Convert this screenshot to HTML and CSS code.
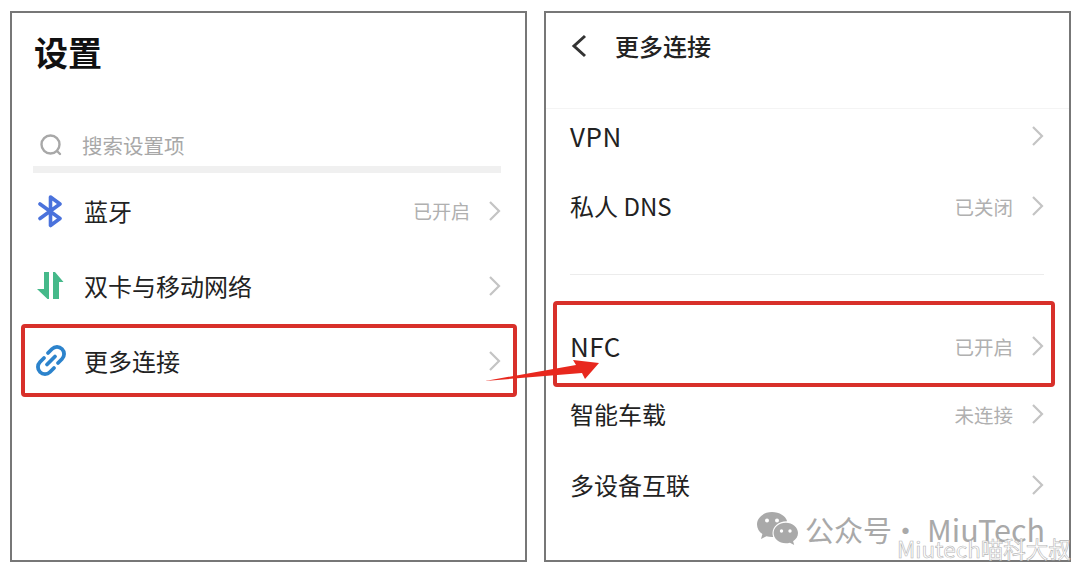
FILE: index.html
```html
<!DOCTYPE html>
<html lang="zh-CN">
<head>
    <meta charset="UTF-8">
    <meta name="viewport" content="width=device-width, initial-scale=1.0">
    <title>更多连接</title>
    <link rel="stylesheet" href="styles.css">
</head>
<body>
    <div class="page">
        <section class="panel left">
            <h1 class="big-title">设置</h1>
            <div class="search">
                <svg class="search-icon" width="24" height="24" viewBox="0 0 24 24"><circle cx="11.5" cy="11.5" r="9" fill="none" stroke="#a8a8a8" stroke-width="2.4"/><path d="M18 18l3 3" stroke="#a8a8a8" stroke-width="2.4" stroke-linecap="round"/></svg>
                <span>搜索设置项</span>
            </div>
            <div class="search-line"></div>
            <div class="row icon-row">
                <svg class="row-icon" width="32" height="34" viewBox="0 0 32 34"><path d="M6 10l20 14.500-9.500 7V3l9.500 7L6 24.500" fill="none" stroke="#4a72dc" stroke-width="3.600" stroke-linejoin="round" stroke-linecap="round"/></svg>
                <span class="row-name">蓝牙</span>
                <span class="status">已开启</span>
                <svg class="chevron" width="13" height="22" viewBox="0 0 13 22"><path d="M2 2l9 9-9 9" fill="none" stroke="#c4c4c4" stroke-width="2.200"/></svg>
            </div>
            <div class="row icon-row">
                <svg class="row-icon" width="32" height="34" viewBox="0 0 32 34"><path d="M10 3h5v27h-1.500L3 20h7zM19 3h2l8.500 10H25v17h-6z" fill="#45b98a"/></svg>
                <span class="row-name">双卡与移动网络</span>
                <svg class="chevron" width="13" height="22" viewBox="0 0 13 22"><path d="M2 2l9 9-9 9" fill="none" stroke="#c4c4c4" stroke-width="2.200"/></svg>
            </div>
            <div class="row icon-row">
                <svg class="row-icon" width="32" height="34" viewBox="0 0 32 34"><path d="M14 9l4-4a7 7 0 0 1 10 10l-4 4M20 24l-4 4A7 7 0 0 1 6 18l4-4M13 20.500l8-8" fill="none" stroke="#2c83cc" stroke-width="3.800" stroke-linecap="round"/></svg>
                <span class="row-name">更多连接</span>
                <svg class="chevron" width="13" height="22" viewBox="0 0 13 22"><path d="M2 2l9 9-9 9" fill="none" stroke="#c4c4c4" stroke-width="2.200"/></svg>
            </div>
        </section>

        <section class="panel right">
            <header class="top-bar">
                <svg class="back" width="16" height="24" viewBox="0 0 16 24"><path d="M14 2L3 12l11 10" fill="none" stroke="#333" stroke-width="3"/></svg>
                <h2 class="top-title">更多连接</h2>
            </header>
            <div class="row plain vpn">
                <span class="row-name latin">VPN</span>
                <svg class="chevron" width="13" height="22" viewBox="0 0 13 22"><path d="M2 2l9 9-9 9" fill="none" stroke="#c4c4c4" stroke-width="2.200"/></svg>
            </div>
            <div class="row plain dns">
                <span class="row-name">私人 DNS</span>
                <span class="status">已关闭</span>
                <svg class="chevron" width="13" height="22" viewBox="0 0 13 22"><path d="M2 2l9 9-9 9" fill="none" stroke="#c4c4c4" stroke-width="2.200"/></svg>
            </div>
            <div class="group-line"></div>
            <div class="row plain nfc">
                <span class="row-name latin">NFC</span>
                <span class="status">已开启</span>
                <svg class="chevron" width="13" height="22" viewBox="0 0 13 22"><path d="M2 2l9 9-9 9" fill="none" stroke="#c4c4c4" stroke-width="2.200"/></svg>
            </div>
            <div class="row plain car">
                <span class="row-name">智能车载</span>
                <span class="status">未连接</span>
                <svg class="chevron" width="13" height="22" viewBox="0 0 13 22"><path d="M2 2l9 9-9 9" fill="none" stroke="#c4c4c4" stroke-width="2.200"/></svg>
            </div>
            <div class="row plain multi">
                <span class="row-name">多设备互联</span>
                <svg class="chevron" width="13" height="22" viewBox="0 0 13 22"><path d="M2 2l9 9-9 9" fill="none" stroke="#c4c4c4" stroke-width="2.200"/></svg>
            </div>
        </section>
    </div>

    <!-- annotations drawn over the screenshots -->
    <div class="red-box box-one"></div>
    <div class="red-box box-two"></div>
    <svg class="arrow" width="120" height="30" viewBox="0 0 120 30"><path d="M0 26L91 10l-3-5 26 3-14 16-3-6z" fill="#e8281e"/></svg>

    <div class="watermark">
        <svg class="wechat" width="41" height="34" viewBox="0 0 41 34">
            <path d="M15 0C6.700 0 0 5.600 0 12.500c0 3.900 2.100 7.300 5.400 9.600L4 27l5.400-2.800c1.800.5 3.700.8 5.600.8h1.200c-.5-1.300-.7-2.600-.7-4 0-6.600 6.200-11.800 13.800-11.800h.8C28.700 4 22.500 0 15 0z" fill="#a9a9a9"/>
            <path d="M41 21c0-5.700-5.500-10.300-12.200-10.300S16.600 15.300 16.600 21s5.500 10.300 12.200 10.300c1.400 0 2.800-.2 4.100-.6l4.300 2.300-1.100-3.800c3-1.900 4.900-4.800 4.900-8.200z" fill="#a9a9a9"/>
            <circle cx="10" cy="8.500" r="2" fill="#fff"/><circle cx="20" cy="8.500" r="2" fill="#fff"/>
            <circle cx="24.500" cy="19" r="1.700" fill="#fff"/><circle cx="33" cy="19" r="1.700" fill="#fff"/>
        </svg>
        <span class="wm-text">公众号<span class="wm-dot">·</span><span class="wm-name">MiuTech</span></span>
    </div>
    <div class="wm-small">Miutech喵科大叔</div>
</body>
</html>
```

FILE: styles.css
```css
* { box-sizing: border-box; }
html, body { margin: 0; height: 573px; overflow: hidden; background: #fff; }
body { position: relative; font-family: "Noto Sans CJK SC", "Noto Sans", sans-serif; color: #222; }
h1, h2 { margin: 0; }

.page { display: flex; gap: 17px; padding: 11px 9px 11px 10px; height: 573px; }
.panel { border: 2px solid #777; height: 551px; background: #fff; }
.panel.left { width: 517px; padding: 0 24px 0 21px; }
.panel.right { width: 527px; }

.big-title { font-size: 34px; line-height: 40px; margin: 19px 0 0 1px; font-weight: 700; color: #111; }

.search { display: flex; align-items: center; height: 30px; margin-top: 58px; padding-left: 6px; font-size: 20.500px; color: #a8a8a8; }
.search-icon { margin-right: 19px; }
.search-line { height: 7px; margin-top: 6px; background: #f0f0f0; }

.row { display: flex; align-items: center; height: 75px; font-size: 24px; }
.row-name { flex: 1; line-height: 30px; color: #222; }
.status { font-size: 19px; color: #b0b0b0; margin-right: 18px; }

.icon-row { padding-left: 1px; }
.row-icon { flex: none; margin-right: 18px; }

.top-bar { display: flex; align-items: center; height: 96px; padding: 0 0 30px 25px; border-bottom: 1px solid #f4f4f4; }
.back { margin-right: 28px; }
.top-title { font-size: 24px; font-weight: 500; color: #222; line-height: 30px; }

.plain { padding: 0 25px 0 24px; }
.plain .status { font-size: 19.500px; }
.latin { font-size: 26px; letter-spacing: 0.5px; }
.vpn { height: 54px; }
.dns { height: 86px; }
.group-line { height: 1px; margin: 25px 25px 36px 24px; background: #ececec; }
.nfc { height: 70px; }
.car { height: 66px; }
.multi { height: 76px; }

.red-box { position: absolute; border: 4.500px solid #d8302a; border-radius: 4px; }
.box-one { left: 21px; top: 324px; width: 496px; height: 73px; }
.box-two { left: 553px; top: 301px; width: 502px; height: 86px; }
.arrow { position: absolute; left: 485px; top: 355px; }

.watermark { position: absolute; left: 757px; top: 508px; display: flex; align-items: center; gap: 7px; color: #a9a9a9; }
.wm-text { font-size: 29px; line-height: 42px; white-space: nowrap; }
.wm-dot { margin: 0 7px 0 -1px; }
.wm-name { font-size: 30.500px; }
.wm-small { position: absolute; left: 897px; top: 533px; font-size: 22.500px; line-height: 30px; color: #fff; -webkit-text-stroke: 0.6px #b5b5b5; white-space: nowrap; }
```
